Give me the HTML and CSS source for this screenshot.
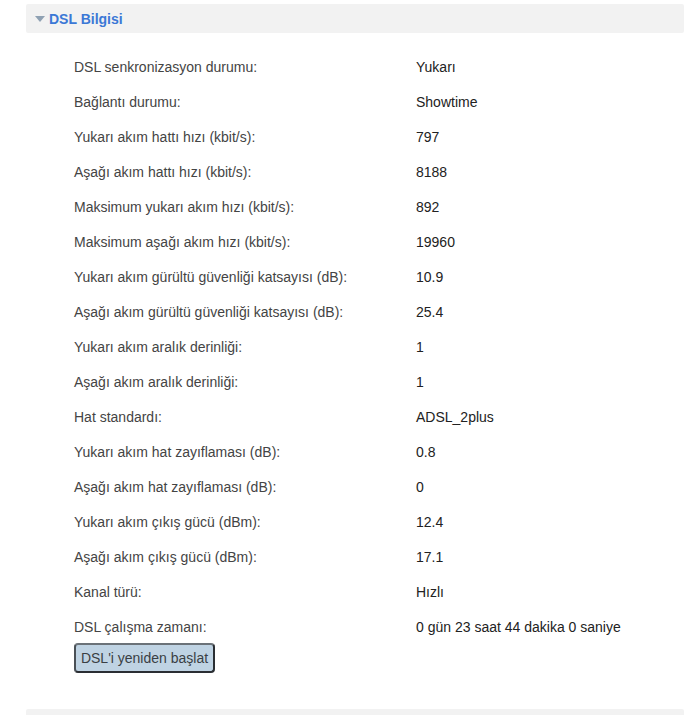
FILE: index.html
```html
<!DOCTYPE html>
<html lang="tr">
<head>
<meta charset="utf-8">
<link rel="stylesheet" href="styles.css">
</head>
<body>
<section class="panel">
  <div class="panel-head">
    <span class="caret"></span>
    <span class="panel-title">DSL Bilgisi</span>
  </div>
  <div class="panel-body">
    <div class="info">
      <div class="lbl">DSL senkronizasyon durumu:</div><div class="val">Yukarı</div>
      <div class="lbl">Bağlantı durumu:</div><div class="val">Showtime</div>
      <div class="lbl">Yukarı akım hattı hızı (kbit/s):</div><div class="val">797</div>
      <div class="lbl">Aşağı akım hattı hızı (kbit/s):</div><div class="val">8188</div>
      <div class="lbl">Maksimum yukarı akım hızı (kbit/s):</div><div class="val">892</div>
      <div class="lbl">Maksimum aşağı akım hızı (kbit/s):</div><div class="val">19960</div>
      <div class="lbl">Yukarı akım gürültü güvenliği katsayısı (dB):</div><div class="val">10.9</div>
      <div class="lbl">Aşağı akım gürültü güvenliği katsayısı (dB):</div><div class="val">25.4</div>
      <div class="lbl">Yukarı akım aralık derinliği:</div><div class="val">1</div>
      <div class="lbl">Aşağı akım aralık derinliği:</div><div class="val">1</div>
      <div class="lbl">Hat standardı:</div><div class="val">ADSL_2plus</div>
      <div class="lbl">Yukarı akım hat zayıflaması (dB):</div><div class="val">0.8</div>
      <div class="lbl">Aşağı akım hat zayıflaması (dB):</div><div class="val">0</div>
      <div class="lbl">Yukarı akım çıkış gücü (dBm):</div><div class="val">12.4</div>
      <div class="lbl">Aşağı akım çıkış gücü (dBm):</div><div class="val">17.1</div>
      <div class="lbl">Kanal türü:</div><div class="val">Hızlı</div>
      <div class="lbl">DSL çalışma zamanı:</div><div class="val">0 gün 23 saat 44 dakika 0 saniye</div>
    </div>
    <button class="btn" type="button">DSL'i yeniden başlat</button>
  </div>
</section>
<section class="panel next">
  <div class="panel-head"></div>
</section>
</body>
</html>
```
FILE: styles.css
```css
html, body {
  margin: 0;
  padding: 0;
  background: #fff;
}
body {
  font-family: "Liberation Sans", Arial, sans-serif;
  font-size: 14px;
  color: #333;
}
.panel {
  margin-left: 26px;
}
.panel:first-child {
  padding-top: 4px;
}
.panel-head {
  height: 29px;
  background: #f2f2f2;
  border-radius: 2px;
  display: flex;
  align-items: center;
  padding-left: 9px;
  gap: 4px;
}
.caret {
  width: 0;
  height: 0;
  border-left: 5px solid transparent;
  border-right: 5px solid transparent;
  border-top: 6px solid #8fa1b3;
  margin-top: 1px;
}
.panel-title {
  font-weight: bold;
  font-size: 14px;
  color: #3b78d6;
}
.panel-body {
  padding: 16px 0 36px 48px;
}
.info {
  display: grid;
  grid-template-columns: 342px auto;
  grid-auto-rows: 35px;
  align-items: center;
}
.lbl {
  color: #444;
}
.val {
  color: #222;
}
.btn {
  display: block;
  margin-top: -1px;
  width: 141px;
  height: 30px;
  padding: 0;
  font-family: "Liberation Sans", Arial, sans-serif;
  font-size: 14px;
  color: #3a3f44;
  background: #bfd3e3;
  border: 2px solid #2a2e33;
  border-top-color: #6b7278;
  border-left-color: #4a5056;
  border-radius: 4px;
}
.next .panel-head {
  height: 20px;
}
```
